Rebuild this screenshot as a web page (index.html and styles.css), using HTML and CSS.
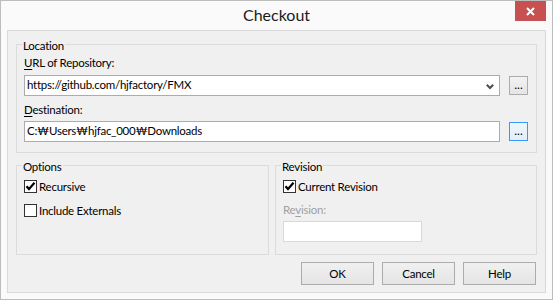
FILE: index.html
```html
<!DOCTYPE html>
<html>
<head>
<meta charset="utf-8">
<link rel="stylesheet" href="styles.css">
</head>
<body>
<div class="window">
  <div class="titlebar">
    <div class="spacer"></div>
    <div class="title">Checkout</div>
    <div class="close-wrap">
      <div class="close">
        <svg width="9" height="9" viewBox="0 0 9 9"><path d="M1 1 L8 8 M8 1 L1 8" stroke="#fff" stroke-width="2" fill="none"/></svg>
      </div>
    </div>
  </div>
  <div class="client">
    <div class="group location">
      <div class="legend">Location</div>
      <div class="label"><u>U</u>RL of Repository:</div>
      <div class="field-row">
        <div class="edit combo">
          <span class="value">https://github.com/hjfactory/FMX</span>
          <svg class="chevron" width="8" height="6" viewBox="0 0 8 6"><path d="M0.8 0.8 L4 4 L7.2 0.8" stroke="#4d4d4d" stroke-width="2" fill="none"/></svg>
        </div>
        <div class="browse">...</div>
      </div>
      <div class="label second"><u>D</u>estination:</div>
      <div class="field-row dest">
        <div class="edit"><span class="value">C:₩Users₩hjfac_000₩Downloads</span></div>
        <div class="browse focused">...</div>
      </div>
    </div>
    <div class="groups">
      <div class="group options">
        <div class="legend">Options</div>
        <div class="check-row">
          <span class="checkbox"><svg width="11" height="11" viewBox="0 0 11 11"><path d="M1.5 5.2 L4 8 L9.5 1.8" stroke="#000" stroke-width="2.2" fill="none"/></svg></span>
          <span>Recursive</span>
        </div>
        <div class="check-row next">
          <span class="checkbox"></span>
          <span>Include Externals</span>
        </div>
      </div>
      <div class="group revision">
        <div class="legend">Revision</div>
        <div class="check-row">
          <span class="checkbox"><svg width="11" height="11" viewBox="0 0 11 11"><path d="M1.5 5.2 L4 8 L9.5 1.8" stroke="#000" stroke-width="2.2" fill="none"/></svg></span>
          <span>Current Revision</span>
        </div>
        <div class="label disabled">Re<u>v</u>ision:</div>
        <div class="edit disabled-edit"></div>
      </div>
    </div>
    <div class="buttons">
      <div class="btn">OK</div>
      <div class="btn">Cancel</div>
      <div class="btn">Help</div>
    </div>
  </div>
</div>
</body>
</html>
```

FILE: styles.css
```css
* { box-sizing: border-box; }
html, body { margin: 0; padding: 0; }
body {
  width: 553px;
  height: 300px;
  background: #ffffff;
  font-family: Lato, "Noto Sans", sans-serif;
  font-size: 11.5px;
  letter-spacing: -0.25px;
  line-height: 15px;
  color: #000;
}
.window {
  width: 553px;
  height: 300px;
  border: 1px solid #bdbdbd;
  background: #fafafa;
  padding: 0 6px 6px 6px;
  display: flex;
  flex-direction: column;
}
.titlebar {
  height: 29px;
  display: grid;
  grid-template-columns: 1fr auto 1fr;
  align-items: start;
  margin: 0 -6px;
  padding: 0 6px;
}
.title {
  font-size: 16px;
  letter-spacing: 0;
  line-height: 20px;
  margin-top: 4px;
  color: #1a1a1a;
}
.close-wrap { display: flex; justify-content: flex-end; }
.close {
  width: 31px;
  height: 20px;
  background: #c75050;
  display: flex;
  align-items: center;
  justify-content: center;
}
.close svg { display: block; }
.client {
  flex: 1;
  border: 1px solid #d9d9d9;
  background: #f0f0f0;
  padding: 13px 8px 0 8px;
  display: flex;
  flex-direction: column;
}
.group {
  position: relative;
  border: 1px solid #dcdcdc;
}
.legend {
  position: absolute;
  top: -7px;
  left: 5px;
  padding: 0 1px;
  background: #f0f0f0;
  line-height: 15px;
}
.location {
  padding: 10px 8px 10px 7px;
}
.label { line-height: 15px; }
.label u { text-decoration-thickness: 1px; text-underline-offset: 2px; }
.label.second { margin-top: 6px; }
.field-row {
  display: flex;
  align-items: center;
  gap: 9px;
  margin-top: 5px;
  height: 21px;
}
.field-row.dest { margin-top: 4px; }
.edit {
  height: 21px;
  background: #fff;
  border: 1px solid #acacac;
  padding: 1px 2px 0 2px;
  line-height: 15px;
  white-space: nowrap;
}
.field-row .edit { flex: 1; }
.combo {
  display: flex;
  align-items: flex-start;
  justify-content: space-between;
}
.chevron { margin-top: 7px; margin-right: 3px; display: block; }
.browse {
  width: 19px;
  height: 19px;
  border: 1px solid #acacac;
  background: linear-gradient(#f2f2f2, #e5e5e5);
  text-align: center;
  line-height: 15px;
  font-size: 12px;
  letter-spacing: 0;
}
.browse.focused {
  border-color: #3399ff;
  background: linear-gradient(#eef5fc, #e3eefa);
}
.groups {
  margin-top: 12px;
  display: grid;
  grid-template-columns: 253px 1fr;
  gap: 6px;
  height: 90px;
}
.options, .revision {
  padding: 13px 7px 0 7px;
}
.check-row {
  display: flex;
  align-items: center;
  height: 15px;
  gap: 2px;
}
.check-row.next { margin-top: 9px; }
.checkbox {
  width: 13px;
  height: 13px;
  border: 1px solid #333;
  background: #fff;
  display: flex;
  align-items: center;
  justify-content: center;
}
.checkbox svg { display: block; }
.label.disabled { color: #a0a0a0; margin-top: 8px; }
.disabled-edit {
  width: 139px;
  margin-top: 4px;
  border-color: #d9d9d9;
}
.buttons {
  margin-top: 7px;
  margin-right: 1px;
  display: flex;
  justify-content: flex-end;
  gap: 8px;
}
.btn {
  width: 73px;
  height: 23px;
  border: 1px solid #acacac;
  background: linear-gradient(#f0f0f0, #e5e5e5);
  display: flex;
  align-items: center;
  justify-content: center;
  line-height: 15px;
}
```
